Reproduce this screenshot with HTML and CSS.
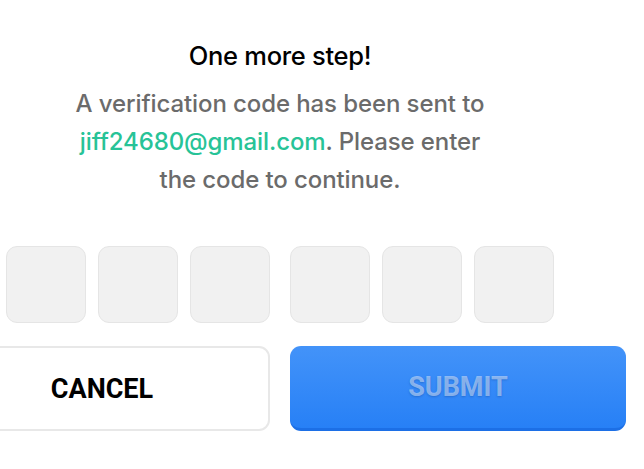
FILE: index.html
```html
<!DOCTYPE html>
<html>
<head>
<meta charset="utf-8">
<link rel="stylesheet" href="styles.css">
</head>
<body>
<div class="sheet">
  <h1 class="title">One more step!</h1>
  <p class="message">A verification code has been sent to<br><span class="email">jiff24680@gmail.com</span>. Please enter<br>the code to continue.</p>
  <div class="code">
    <div class="group">
      <div class="digit"></div>
      <div class="digit"></div>
      <div class="digit"></div>
    </div>
    <div class="group">
      <div class="digit"></div>
      <div class="digit"></div>
      <div class="digit"></div>
    </div>
  </div>
  <div class="actions">
    <button class="btn cancel">CANCEL</button>
    <button class="btn submit">SUBMIT</button>
  </div>
</div>
</body>
</html>
```
FILE: styles.css
```css
html, body {
  margin: 0;
  padding: 0;
  background: #ffffff;
  overflow: hidden;
}
.sheet {
  width: 692px;
  margin-left: -66px;
  display: flex;
  flex-direction: column;
  align-items: center;
  font-family: Inter, "Liberation Sans", sans-serif;
}
.title {
  margin: 41px 0 0;
  font-size: 25.5px;
  line-height: 30px;
  font-weight: 500;
  color: #000;
  letter-spacing: -0.3px;
}
.message {
  margin: 14px 0 0;
  text-align: center;
  font-size: 24px;
  line-height: 38px;
  font-weight: 500;
  color: #6b6b6b;
  letter-spacing: -0.1px;
}
.email {
  color: #27c397;
}
.code {
  margin-top: 47px;
  display: flex;
  gap: 20px;
}
.group {
  display: flex;
  gap: 12px;
}
.digit {
  width: 78px;
  height: 75px;
  box-sizing: content-box;
  background: #f1f1f1;
  border: 1px solid #e5e5e5;
  border-radius: 11px;
}
.actions {
  margin-top: 23px;
  display: flex;
  gap: 20px;
}
.btn {
  width: 336px;
  height: 85px;
  box-sizing: border-box;
  border-radius: 11px;
  font-family: Roboto, "Liberation Sans", sans-serif;
  font-weight: 700;
  font-size: 27px;
  padding: 0;
}
.cancel {
  background: #fff;
  border: 2px solid #e8e8e8;
  color: #000;
}
.submit {
  border: none;
  border-bottom: 3px solid #1c6fe6;
  background: linear-gradient(#4393f9, #2780f6);
  color: rgba(255, 255, 255, 0.45);
  text-shadow: 0 1px 2px rgba(0, 40, 120, 0.25);
}
```
